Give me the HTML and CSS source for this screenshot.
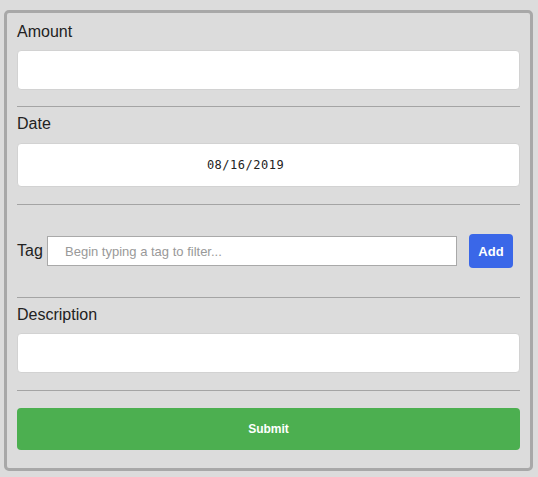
FILE: index.html
```html
<!DOCTYPE html>
<html>
<head>
<meta charset="utf-8">
<link rel="stylesheet" href="styles.css">
</head>
<body>
<form class="card">
  <label class="label">Amount</label>
  <input class="field" type="text">
  <hr class="rule rule-a">
  <label class="label label-date">Date</label>
  <div class="field field-date"><span class="date-text">08/16/2019</span></div>
  <hr class="rule rule-b">
  <div class="tag-row">
    <span class="tag-label">Tag</span>
    <input class="tag-input" type="text" placeholder="Begin typing a tag to filter...">
    <button class="btn-add" type="button">Add</button>
  </div>
  <hr class="rule rule-c">
  <label class="label label-desc">Description</label>
  <input class="field" type="text">
  <hr class="rule rule-b">
  <button class="btn-submit" type="button">Submit</button>
</form>
</body>
</html>
```
FILE: styles.css
```css
* { box-sizing: border-box; }
html, body { margin: 0; }
body {
  background: #dcdcdc;
  padding: 10px 5px 0 4px;
  font-family: "Liberation Sans", Arial, sans-serif;
  color: #222;
}
.card {
  width: 529px;
  height: 461px;
  border: 3px solid #a8a8a8;
  border-radius: 5px;
  padding: 10px 10px 17px;
  display: flex;
  flex-direction: column;
  margin: 0;
}
.label {
  display: block;
  font-size: 16px;
  line-height: 18px;
  height: 18px;
  margin-bottom: 9px;
}
.label-date { margin-top: 8px; margin-bottom: 10px; }
.label-desc { margin-top: 8px; }
.field {
  display: block;
  width: 100%;
  height: 40px;
  background: #fff;
  border: 1px solid #d2d2d2;
  border-radius: 4px;
  margin: 0;
  outline: none;
}
.field-date {
  height: 44px;
  display: flex;
  align-items: center;
  justify-content: center;
  padding-right: 46px;
}
.date-text {
  font-family: "DejaVu Sans Mono", monospace;
  font-size: 12px;
  letter-spacing: 0.5px;
  color: #222;
}
.rule {
  border: 0;
  height: 1px;
  background: #a4a4a4;
  margin: 16px 0 0;
  width: 100%;
}
.rule-b { margin-top: 17px; }
.rule-c { margin-top: 29px; }
.tag-row {
  display: flex;
  align-items: center;
  height: 34px;
  margin-top: 29px;
  padding-right: 7px;
}
.tag-label {
  font-size: 16px;
  width: 30px;
}
.tag-input {
  flex: 1;
  height: 30px;
  border: 1px solid #a9a9a9;
  background: #fff;
  padding: 0 0 0 17px;
  font-family: "Liberation Sans", Arial, sans-serif;
  font-size: 13px;
  outline: none;
  margin: 0 12px 0 0;
}
.tag-input::placeholder { color: #999; }
.btn-add {
  width: 44px;
  height: 34px;
  border: 0;
  border-radius: 4px;
  background: #3a67e8;
  color: #fff;
  font-family: "Liberation Sans", Arial, sans-serif;
  font-weight: bold;
  font-size: 13px;
  padding: 0;
}
.btn-submit {
  margin-top: 17px;
  width: 100%;
  height: 42px;
  border: 0;
  border-radius: 4px;
  background: #4caf50;
  color: #fff;
  font-family: "Liberation Sans", Arial, sans-serif;
  font-weight: bold;
  font-size: 12px;
  padding: 0;
}
```
